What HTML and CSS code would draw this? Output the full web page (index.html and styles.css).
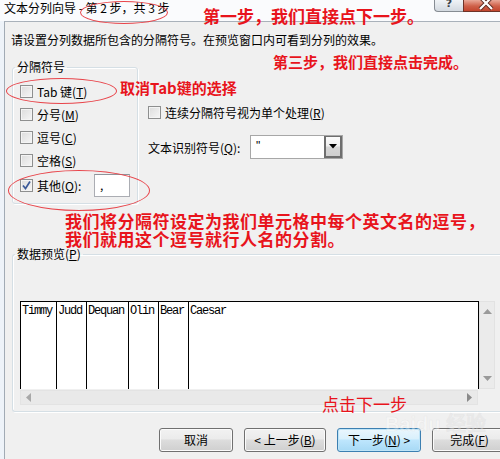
FILE: index.html
```html
<!DOCTYPE html>
<html lang="zh-CN">
<head>
<meta charset="utf-8">
<title>文本分列向导</title>
<link rel="stylesheet" href="styles.css">
</head>
<body>
<div class="win">
  <div class="titlebar">
    <span class="title">文本分列向导 - 第 2 步，共 3 步</span>
    <div class="capbtns">
      <span class="cap help">?</span>
      <span class="cap close"><svg class="xicon" width="16" height="12" viewBox="0 0 16 12"><path d="M2 -3 L14 9 M14 -3 L2 9" stroke="#5a2a22" stroke-width="4" fill="none"/><path d="M2 -3 L14 9 M14 -3 L2 9" stroke="#ffffff" stroke-width="2.2" fill="none"/></svg></span>
    </div>
  </div>
  <div class="client">
    <p class="intro">请设置分列数据所包含的分隔符号。在预览窗口内可看到分列的效果。</p>
    <div class="toprow">
      <fieldset class="group delim">
        <legend>分隔符号</legend>
        <div class="chk first"><span class="box"></span><span>Tab 键(<u>T</u>)</span></div>
        <div class="chk"><span class="box"></span><span>分号(<u>M</u>)</span></div>
        <div class="chk"><span class="box"></span><span>逗号(<u>C</u>)</span></div>
        <div class="chk"><span class="box"></span><span>空格(<u>S</u>)</span></div>
        <div class="chk other"><span class="box"><svg width="11" height="11" viewBox="0 0 11 11"><path d="M2 5.5 L4.5 8.5 L9 1.5" stroke="#3b5998" stroke-width="1.7" fill="none"/></svg></span><span class="olabel">其他(<u>O</u>):</span><span class="textbox">,</span></div>
      </fieldset>
      <div class="opts">
        <div class="chk"><span class="box"></span><span>连续分隔符号视为单个处理(<u>R</u>)</span></div>
        <div class="qual">
          <span class="qlabel">文本识别符号(<u>Q</u>):</span>
          <div class="combo"><span class="val">"</span><span class="drop"><svg width="8" height="5" viewBox="0 0 8 5"><path d="M0 0 H8 L4 4.5 Z" fill="#000"/></svg></span></div>
        </div>
      </div>
    </div>
    <fieldset class="group preview">
      <legend>数据预览(<u>P</u>)</legend>
      <div class="pv">
        <div class="grid">
          <div class="gc c36">Timmy</div>
          <div class="gc c30">Judd</div>
          <div class="gc c42">Dequan</div>
          <div class="gc c30">Olin</div>
          <div class="gc c30">Bear</div>
          <div class="gc last">Caesar</div>
        </div>
        <div class="vscroll">
          <svg width="9" height="5" viewBox="0 0 9 5"><path d="M0 5 L4.5 0 L9 5 Z" fill="#9a9a9a"/></svg>
          <svg width="9" height="5" viewBox="0 0 9 5"><path d="M0 0 L4.5 5 L9 0 Z" fill="#9a9a9a"/></svg>
        </div>
      </div>
      <div class="hscroll">
        <svg width="5" height="9" viewBox="0 0 5 9"><path d="M5 0 L0 4.5 L5 9 Z" fill="#a8a8a8"/></svg>
        <svg width="5" height="9" viewBox="0 0 5 9"><path d="M0 0 L5 4.5 L0 9 Z" fill="#8a8a8a"/></svg>
      </div>
    </fieldset>
    <div class="buttons">
      <span class="btn w73">取消</span>
      <span class="btn w81">&lt; 上一步(<u>B</u>)</span>
      <span class="btn w83 default">下一步(<u>N</u>) &gt;</span>
      <span class="btn w75">完成(<u>F</u>)</span>
    </div>
  </div>

  <span class="ring r1"></span>
  <span class="ring r2"></span>
  <span class="ring r3"></span>
  <div class="note n1">第一步，我们直接点下一步。</div>
  <div class="note n2">第三步，我们直接点击完成。</div>
  <div class="note n3">取消Tab键的选择</div>
  <div class="note n4">我们将分隔符设定为我们单元格中每个英文名的逗号，<br>我们就用这个逗号就行人名的分割。</div>
  <div class="note n5">点击下一步</div>
  <div class="wm">Baidu 经验</div>
</div>
</body>
</html>
```
FILE: styles.css
```css
* { box-sizing: border-box; }
html, body { margin: 0; padding: 0; }
body {
  width: 500px;
  height: 459px;
  overflow: hidden;
  background: #f0f0f0;
  font-family: "Noto Sans CJK SC", "Microsoft YaHei", sans-serif;
  font-size: 12px;
  color: #000;
}
u { text-decoration: underline; text-underline-offset: 1px; }

.win {
  position: relative;
  width: 500px;
  height: 459px;
  display: flex;
  flex-direction: column;
  background: linear-gradient(90deg, #eef3f9, #e3ebf4);
}

/* title bar */
.titlebar {
  height: 21px;
  flex: none;
  display: flex;
  align-items: flex-start;
  padding-left: 4px;
  background: #fafbfd;
}
.title { line-height: 16px; font-size: 12px; color: #000; }
.capbtns { margin-left: auto; display: flex; }
.cap { height: 12px; display: block; }
.help {
  width: 29px;
  border: 1px solid #868c93;
  border-top: none;
  border-right: none;
  border-radius: 0 0 0 4px;
  background: linear-gradient(#f0f3f6, #d3d9e0);
  color: #3b4048;
  font-family: "DejaVu Sans", sans-serif;
  font-weight: bold;
  font-size: 11px;
  line-height: 7px;
  text-align: center;
  overflow: hidden;
}
.close {
  width: 37px;
  border: 1px solid #6e3328;
  border-top: none;
  border-right: none;
  background: linear-gradient(#e9a898, #cf6049 55%, #c2452e);
  position: relative;
  overflow: hidden;
}
.xicon { position: absolute; left: 14px; top: 0; }

/* client area */
.client {
  flex: 1;
  margin-left: 4px;
  border-left: 1px solid #a2abb5;
  border-top: 1px solid #a9b1ba;
  background: #f0f0f0;
  display: flex;
  flex-direction: column;
}
.intro {
  margin: 10px 0 0 6px;
  line-height: 16px;
}
.toprow {
  display: flex;
  align-items: flex-start;
  margin-top: 12px;
}

.group {
  margin: 0 0 0 7px;
  border: 1px solid #d5dfe5;
  border-radius: 3px;
  box-shadow: inset 1px 1px 0 #fff, 1px 1px 0 #fff;
  min-width: 0;
}
.group legend {
  margin-left: -5px;
  padding: 0 2px;
  line-height: 14px;
  font-size: 12px;
}
.delim {
  width: 126px;
  padding: 0 0 4px 7px;
  display: flex;
  flex-direction: column;
}
.chk {
  display: flex;
  align-items: center;
  height: 23px;
  white-space: nowrap;
}
.chk.first { margin-top: 6px; }
.box {
  flex: none;
  width: 13px;
  height: 13px;
  margin-right: 4px;
  border: 1px solid #8e8f8f;
  background: linear-gradient(135deg, #dcdcdc, #f6f6f6);
  box-shadow: inset 0 0 0 1px #f4f4f4;
  display: flex;
  align-items: center;
  justify-content: center;
}
.chk.other { height: 27px; }
.olabel { width: 57px; }
.textbox {
  width: 36px;
  height: 23px;
  border: 1px solid #abadb3;
  border-top-color: #8f949b;
  background: #fff;
  padding-left: 5px;
  line-height: 19px;
  font-size: 12px;
}

.opts {
  margin-left: 10px;
  padding-top: 44px;
  display: flex;
  flex-direction: column;
}
.opts .chk { height: 16px; }
.qual {
  display: flex;
  align-items: center;
  margin-top: 15px;
  height: 24px;
}
.qlabel { width: 102px; white-space: nowrap; }
.combo {
  width: 93px;
  height: 24px;
  border: 1px solid #a7a7a7;
  background: #fff;
  display: flex;
}
.val {
  padding-left: 5px;
  line-height: 20px;
  font-family: "Liberation Sans", sans-serif;
}
.drop {
  margin-left: auto;
  width: 18px;
  height: 22px;
  border: 2px solid #6e6e6e;
  border-top-width: 1px;
  background: linear-gradient(#fbfbfb, #f0f0f0 45%, #d6d6d6 55%, #cfcfcf);
  display: flex;
  align-items: center;
  justify-content: center;
}

/* preview */
.preview {
  width: 510px;
  margin-top: 44px;
  padding: 0 0 6px 7px;
  border-right: none;
}
.preview legend { line-height: 12px; }
.pv {
  margin-top: 41px;
  display: flex;
  height: 88px;
}
.grid {
  width: 459px;
  border: 1px solid #000;
  border-bottom: none;
  background: #fff;
  display: flex;
  font-family: "Liberation Mono", monospace;
  font-size: 12px;
  letter-spacing: -1.2px;
  line-height: 14px;
}
.gc {
  flex: none;
  border-right: 1px solid #000;
  padding: 2px 0 0 1px;
  overflow: hidden;
  white-space: nowrap;
}
.c36 { width: 36px; }
.c30 { width: 30px; }
.c42 { width: 42px; }
.gc.last { border-right: none; flex: 1; }
.vscroll {
  width: 16px;
  background: #ebebeb;
  border: 1px solid #e2e2e2;
  display: flex;
  flex-direction: column;
  align-items: center;
  justify-content: space-between;
  padding: 7px 0 7px;
}
.hscroll {
  margin-top: 1px;
  width: 458px;
  height: 15px;
  background: #e9e9e9;
  border: 1px solid #e3e3e3;
  display: flex;
  align-items: center;
  justify-content: space-between;
  padding: 0 5px;
}

/* buttons */
.buttons {
  display: flex;
  gap: 11px;
  margin: 16px 0 0 154px;
}
.btn {
  flex: none;
  height: 24px;
  border: 1px solid #707070;
  border-radius: 3px;
  background: linear-gradient(#f2f2f2, #ebebeb 45%, #dddddd 50%, #cfcfcf);
  box-shadow: inset 0 0 0 1px #fbfbfb;
  text-align: center;
  line-height: 22px;
  font-size: 12px;
  white-space: nowrap;
}
.w73 { width: 74px; }
.w81 { width: 82px; }
.w83 { width: 84px; }
.w75 { width: 75px; }
.btn.default {
  border-color: #3c7fb1;
  box-shadow: inset 0 0 0 1px #bfe4f7;
  background: linear-gradient(#eaf6fd, #d9f0fc 45%, #bee6fd 50%, #a7d9f5);
}

/* annotations */
.ring {
  position: absolute;
  border: 1px solid #e8444a;
  border-radius: 50%;
}
.r1 { left: 80px; top: 1px; width: 88px; height: 23px; }
.r2 { left: 6px; top: 78px; width: 111px; height: 26px; }
.r3 { left: 8px; top: 170px; width: 142px; height: 41px; }

.note {
  position: absolute;
  color: #e8141c;
  font-weight: 700;
  white-space: nowrap;
}
.n1 { left: 203px; top: 7px; font-size: 17px; line-height: 17px; }
.n2 { left: 273px; top: 54px; font-size: 15px; line-height: 15px; }
.n3 { left: 120px; top: 80px; font-size: 15px; line-height: 15px; }
.n4 { left: 65px; top: 212px; font-size: 17px; letter-spacing: 0.5px; line-height: 17.5px; }
.n5 { left: 322px; top: 395px; font-size: 17px; line-height: 17px; font-weight: 400; }

.wm {
  position: absolute;
  left: 385px;
  top: 408px;
  font-family: "Liberation Sans", sans-serif;
  font-size: 20px;
  font-weight: 700;
  color: rgba(255, 255, 255, 0.35);
  -webkit-text-stroke: 0.5px rgba(180, 180, 180, 0.2);
  white-space: nowrap;
  pointer-events: none;
}
```
